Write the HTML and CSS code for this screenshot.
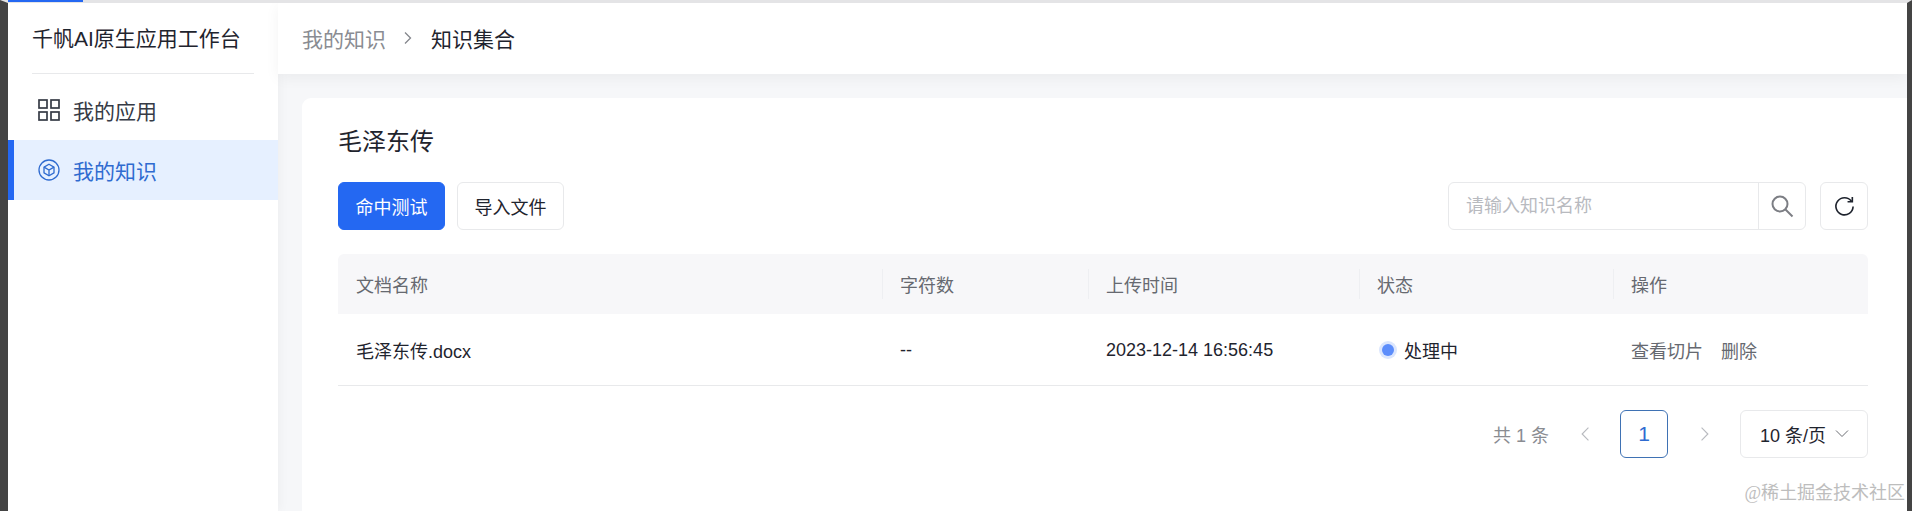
FILE: index.html
```html
<!DOCTYPE html>
<html lang="zh-CN">
  <head>
    <meta charset="UTF-8" />
    <title>我的知识</title>
    <link rel="stylesheet" href="styles.css">
  </head>

  <body>
    <div class="progress"></div>

    <aside class="sidebar">
      <div class="brand"><span>千帆AI原生应用工作台</span></div>
      <a class="menu-item">
        <svg class="menu-icon" viewBox="0 0 22 22" fill="none" stroke="currentColor" stroke-width="1.7">
          <rect x="1" y="1" width="8" height="8" />
          <rect x="13" y="1" width="8" height="8" />
          <rect x="1" y="13" width="8" height="8" />
          <rect x="13" y="13" width="8" height="8" />
        </svg>
        我的应用
      </a>
      <a class="menu-item active">
        <svg class="menu-icon" viewBox="0 0 22 22" fill="none" stroke="currentColor" stroke-width="1.3">
          <circle cx="11" cy="11" r="10" />
          <path d="M11 5.2l5 2.9v5.8l-5 2.9-5-2.9V8.100z" />
          <path d="M6 8.100l5 2.900 5-2.900M11 11v5.800" />
        </svg>
        我的知识
      </a>
    </aside>

    <div class="main">
      <header class="crumbs">
        <span class="crumb-link">我的知识</span>
        <svg class="crumb-sep" viewBox="0 0 10 14" fill="none" stroke="currentColor" stroke-width="1.3">
          <path d="M2 1.500l5.500 5.500-5.500 5.500" />
        </svg>
        <span>知识集合</span>
      </header>

      <section class="card">
        <h1>毛泽东传</h1>

        <div class="toolbar">
          <button class="btn primary">命中测试</button>
          <button class="btn">导入文件</button>
          <div class="search">
            <div class="search-input">请输入知识名称</div>
            <div class="search-btn">
              <svg viewBox="0 0 24 24" fill="none" stroke="currentColor" stroke-width="2">
                <circle cx="10" cy="10" r="7.500" />
                <path d="M15.500 15.500l7 7" />
              </svg>
            </div>
          </div>
          <button class="icon-btn">
            <svg viewBox="0 0 22 22" fill="none" stroke="currentColor" stroke-width="1.700">
              <path d="M18.300 5.500A9 9 0 1 0 20 11" />
              <path d="M19.200 1v5h-5" />
            </svg>
          </button>
        </div>

        <div class="table">
          <div class="row head">
            <div class="cell">文档名称</div>
            <div class="cell">字符数</div>
            <div class="cell">上传时间</div>
            <div class="cell">状态</div>
            <div class="cell">操作</div>
          </div>
          <div class="row body">
            <div class="cell">毛泽东传.docx</div>
            <div class="cell latin">--</div>
            <div class="cell latin">2023-12-14 16:56:45</div>
            <div class="cell"><i class="dot"></i>处理中</div>
            <div class="cell actions"><a>查看切片</a><a>删除</a></div>
          </div>
        </div>

        <div class="pager">
          <span class="total">共 1 条</span>
          <svg class="pager-arrow" viewBox="0 0 10 14" fill="none" stroke="currentColor" stroke-width="1">
            <path d="M8 1.500L2.500 7 8 12.500" />
          </svg>
          <span class="page">1</span>
          <svg class="pager-arrow" viewBox="0 0 10 14" fill="none" stroke="currentColor" stroke-width="1">
            <path d="M2 1.500L7.500 7 2 12.500" />
          </svg>
          <div class="page-size">
            10 条/页
            <svg viewBox="0 0 14 10" fill="none" stroke="currentColor" stroke-width="1">
              <path d="M1 1.500l6 6 6-6" />
            </svg>
          </div>
        </div>
      </section>
    </div>

    <div class="watermark">@稀土掘金技术社区</div>
  </body>
</html>
```

FILE: styles.css
```css
* {
  box-sizing: border-box;
}

html,
body {
  height: 100%;
}

body {
  margin: 0;
  display: flex;
  height: 511px;
  overflow: hidden;
  background: #f6f7f9;
  border-left: 8px solid #444;
  border-right: 5px solid #444;
  border-top: 3px solid #e4e4e6;
  font-family: "Liberation Sans", "Noto Sans CJK SC", sans-serif;
  font-size: 18px;
  color: #1f242e;
}

.progress {
  position: absolute;
  left: 8px;
  top: 0;
  width: 75px;
  height: 2px;
  background: #2468f2;
}

.sidebar {
  width: 270px;
  flex-shrink: 0;
  background: #fff;
  box-shadow: 2px 0 10px rgba(0, 0, 0, 0.04);
}

.brand {
  margin: 0 24px 0 24px;
  height: 71px;
  padding-bottom: 3px;
  display: flex;
  align-items: center;
  border-bottom: 1px solid #e8e9eb;
  font-size: 21px;
  white-space: nowrap;
}

.menu-item {
  display: flex;
  align-items: center;
  height: 60px;
  margin-top: 6px;
  padding-left: 30px;
  font-size: 21px;
  color: #363b46;
}

.menu-item + .menu-item {
  margin-top: 0;
}

.menu-item.active {
  padding-left: 24px;
  border-left: 6px solid #2468f2;
  background: #e6f0ff;
  color: #2f6bd0;
}

.menu-icon {
  width: 22px;
  height: 22px;
  margin-right: 13px;
  flex-shrink: 0;
}

.main {
  flex: 1;
  min-width: 0;
}

.crumbs {
  display: flex;
  align-items: center;
  height: 71px;
  padding: 0 0 2px 24px;
  background: #fff;
  box-shadow: 0 4px 14px rgba(0, 0, 0, 0.05);
  font-size: 21px;
}

.crumb-link {
  color: #8a8c92;
}

.crumb-sep {
  width: 10px;
  height: 14px;
  margin: 0 18px 0 17px;
  color: #84868c;
}

.card {
  margin: 24px 0 0 24px;
  padding: 27px 39px 0 36px;
  height: 420px;
  background: #fff;
  border-radius: 9px 0 0 0;
}

h1 {
  margin: 0;
  height: 34px;
  line-height: 34px;
  font-size: 24px;
  font-weight: 400;
}

.toolbar {
  display: flex;
  align-items: center;
  gap: 12px;
  margin-top: 23px;
}

.btn {
  width: 107px;
  height: 48px;
  padding: 0;
  border: 1px solid #e8e9eb;
  border-radius: 6px;
  background: #fff;
  color: #1f242e;
  font: inherit;
}

.btn.primary {
  border-color: #2468f2;
  background: #2468f2;
  color: #fff;
}

.search {
  display: flex;
  width: 358px;
  height: 48px;
  margin-left: auto;
  border: 1px solid #e8e9eb;
  border-radius: 6px;
}

.search-input {
  flex: 1;
  padding-left: 17px;
  line-height: 46px;
  color: #b8babf;
}

.search-btn {
  display: flex;
  align-items: center;
  justify-content: center;
  width: 47px;
  border-left: 1px solid #e8e9eb;
  color: #7c7e84;
}

.search-btn svg {
  width: 24px;
  height: 24px;
}

.icon-btn {
  display: flex;
  align-items: center;
  justify-content: center;
  width: 48px;
  height: 48px;
  margin-left: 2px;
  padding: 0;
  border: 1px solid #e8e9eb;
  border-radius: 6px;
  background: #fff;
  color: #1f242e;
}

.icon-btn svg {
  width: 21px;
  height: 21px;
}

.table {
  margin-top: 24px;
}

.row {
  display: grid;
  grid-template-columns: 544px 206px 271px 254px 255px;
  align-items: center;
}

.head {
  height: 60px;
  border-radius: 6px 6px 0 0;
  background: #f7f7f9;
  color: #666970;
}

.body {
  height: 72px;
  border-bottom: 1px solid #e8e9eb;
}

.cell {
  display: flex;
  align-items: center;
  padding-left: 18px;
}

.cell.latin {
  padding-top: 2px;
}

.head .cell + .cell {
  padding-left: 0;
}

.head .cell + .cell::before {
  content: "";
  width: 1px;
  height: 30px;
  margin-right: 17px;
  background: #eeeff2;
}

.dot {
  width: 12px;
  height: 12px;
  margin: 0 10px 0 5px;
  border-radius: 50%;
  background: #5c8dfb;
  box-shadow: 0 0 0 3px #dbe6fd;
}

.actions {
  gap: 18px;
  color: #666970;
}

.pager {
  display: flex;
  align-items: center;
  height: 48px;
  margin-top: 24px;
  justify-content: flex-end;
  color: #8a8c92;
}

.total {
  margin-right: 30px;
}

.pager-arrow {
  width: 12px;
  height: 16px;
  color: #b8babf;
}

.page {
  width: 48px;
  height: 48px;
  margin: 0 31px 0 29px;
  border: 1px solid #3f72b4;
  border-radius: 6px;
  line-height: 46px;
  text-align: center;
  font-size: 21px;
  color: #2f6bd0;
}

.page-size {
  display: flex;
  align-items: center;
  gap: 9px;
  width: 128px;
  height: 48px;
  margin-left: 29px;
  padding-left: 19px;
  border: 1px solid #e8e9eb;
  border-radius: 6px;
  color: #1f242e;
}

.page-size svg {
  width: 14px;
  height: 10px;
  color: #6b6d73;
}

.watermark {
  position: absolute;
  right: 7px;
  bottom: 7px;
  font-size: 18px;
  font-family: "Liberation Serif", "Noto Sans CJK SC", serif;
  color: #bdbdbd;
}
```
